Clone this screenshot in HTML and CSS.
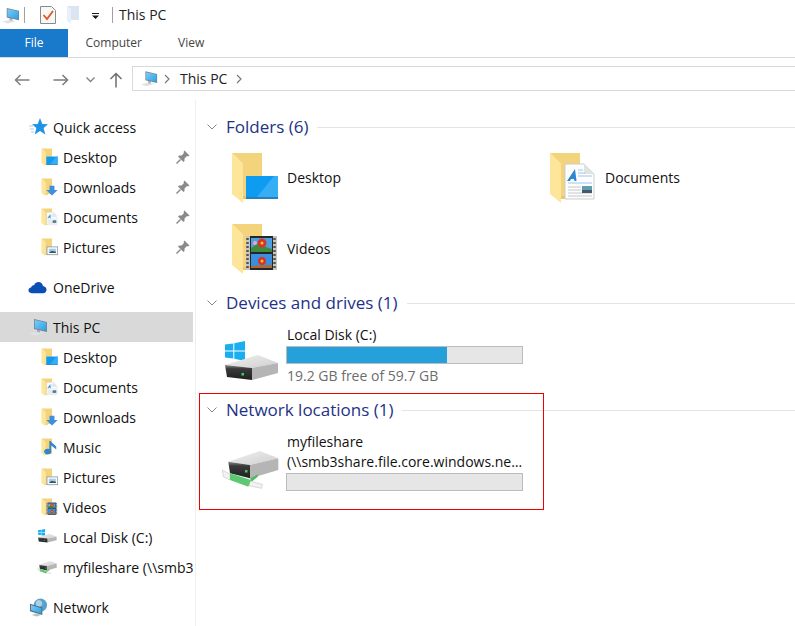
FILE: index.html
```html
<!DOCTYPE html>
<html lang="en">
<head>
<meta charset="utf-8">
<title>This PC</title>
<link rel="stylesheet" href="styles.css">
</head>
<body>
<svg class="defs" aria-hidden="true">
  <defs>
    <linearGradient id="scr" x1="0" y1="0" x2="1" y2="1"><stop offset="0" stop-color="#7ccdf7"/><stop offset="1" stop-color="#2aa0e6"/></linearGradient>
    <linearGradient id="topface" x1="0" y1="0" x2="1" y2="1"><stop offset="0" stop-color="#f0f0f0"/><stop offset="1" stop-color="#cfcfcf"/></linearGradient>
    <linearGradient id="panel" x1="0" y1="0" x2="0" y2="1"><stop offset="0" stop-color="#8c8c8c"/><stop offset=".25" stop-color="#3a3a3a"/><stop offset="1" stop-color="#1f2020"/></linearGradient>
    <symbol id="pc" viewBox="0 0 20 18">
      <path d="M1 15.500 10 13.500 16 15 7 17.500Z" fill="#dfe2e5"/>
      <path d="M9 11.500v2.500l3 .5v-2.500Z" fill="#a8b0b6"/>
      <path d="M6 1 19 4v10L6 11Z" fill="#76848f"/>
      <path d="M6.800 2 18.200 4.600v8.200L6.800 10.200Z" fill="url(#scr)"/>
    </symbol>
    <symbol id="folder" viewBox="0 0 48 52">
      <path d="M1 1h30v44H12V12Z" fill="#f3d37b"/>
      <path d="M1 1 12 12 12 51 1 42Z" fill="#fde69a"/>
      <path d="M12 44h8v3h-8Z" fill="#e9c668"/>
    </symbol>
    <symbol id="ov-desktop" viewBox="0 0 48 52">
      <rect x="15" y="24" width="32" height="23" fill="#0e9bf2"/>
      <path d="M26 45 43 24h4v21Z" fill="#35aef5"/>
      <rect x="15" y="45" width="32" height="2" fill="#2a7fb8"/>
    </symbol>
    <symbol id="ov-down" viewBox="0 0 48 52">
      <path d="M24 22h14v12h9L31 49 15 34h9Z" fill="#3f8fdc"/>
    </symbol>
    <symbol id="ov-doc" viewBox="0 0 48 52">
      <path d="M16 12h19l10 10v25H16Z" fill="#fdfdfd" stroke="#c9cdd0"/>
      <path d="M35 12v10h10Z" fill="#dfe3e6"/>
      <path d="M24 20 18 29h3l1-2h3l.5 2h2L26 17Z" fill="#2f86d0"/>
      <path d="M29 18h5M29 21h7M29 24h14M19 31h24" stroke="#9cc8ea"/>
      <path d="M19 35h13M19 38h13M19 41h24M19 44h24" stroke="#c4c8cc"/>
      <rect x="33" y="34" width="10" height="7" fill="#5f9db0"/>
      <rect x="33" y="38" width="10" height="3" fill="#44596a"/>
    </symbol>
    <symbol id="ov-pic" viewBox="0 0 48 52">
      <rect x="17" y="25" width="30" height="22" fill="#fff" stroke="#8f9aa3" stroke-width="2.400"/>
      <rect x="22" y="30" width="20" height="12" fill="#9fcdf0"/>
      <path d="M22 42 30 36l12 3v3Z" fill="#3d5563"/>
    </symbol>
    <symbol id="ov-music" viewBox="0 0 48 52">
      <path d="M26 8v26" stroke="#2f86d0" stroke-width="5" fill="none"/>
      <path d="M26 8 43 24v8L26 18Z" fill="#2f86d0"/>
      <ellipse cx="19" cy="38" rx="10" ry="8" fill="#2f86d0"/>
    </symbol>
    <symbol id="ov-film" viewBox="0 0 48 52">
      <rect x="15" y="13" width="31" height="34" fill="#c9c6bf"/>
      <rect x="19" y="13" width="23" height="34" fill="#23272b"/>
      <path d="M16.500 15v30M43.500 15v30" stroke="#55544f" stroke-width="2.500" stroke-dasharray="2 2"/>
      <rect x="20" y="15" width="21" height="14" fill="#4da0e0"/>
      <rect x="20" y="31" width="21" height="14" fill="#3a8fe0"/>
      <path d="M20 25 26 21 41 26v3H20Z" fill="#3f8a3c"/>
      <path d="M20 43 41 42v3H20Z" fill="#b06a2c"/>
      <circle cx="31" cy="20" r="4.500" fill="#d8332a"/>
      <circle cx="31" cy="20" r="1.500" fill="#f2c41f"/>
      <circle cx="31" cy="38" r="4" fill="#d8332a"/>
      <circle cx="31" cy="38" r="1.500" fill="#f2c41f"/>
      <circle cx="24" cy="20" r="2" fill="#e8a8c8"/>
    </symbol>
    <symbol id="star" viewBox="0 0 19 18">
      <path d="M11 0 13.300 6 19 6.200 14.600 10 16.300 16.500 11 13 5.700 16.500 7.400 10 3 6.200 8.700 6Z" fill="#1f93e6"/>
      <path d="M0 8h4M1 11h4M2 14h3" stroke="#a8d0ee"/>
    </symbol>
    <symbol id="cloud" viewBox="0 0 20 13">
      <path d="M4 12.500C1.500 12.500.5 11 .5 9.500.5 8 1.500 6.800 3.200 6.600 3.800 4.800 5 4.200 6.400 4.200 7.300 2 9 .8 11 .8c2.700 0 4.500 1.800 4.800 4.200 2 .2 3.700 1.800 3.700 3.800 0 2-1.500 3.700-3.700 3.700Z" fill="#0b4fb4"/>
    </symbol>
    <symbol id="globe" viewBox="0 0 20 20">
      <circle cx="12" cy="7.500" r="7" fill="#5aa0c9"/>
      <path d="M8 3c3-2 6 0 6 3s-3 2-4 5-4-5-2-8Z" fill="#a9d2e8"/>
      <path d="M1 6 14 10v8L1 14Z" fill="#546a7a"/>
      <path d="M2 7.300 13 10.700v6L2 13Z" fill="url(#scr)"/>
      <path d="M3 18l5-2 5 2-5 1.500Z" fill="#b8c0c6"/>
    </symbol>
    <symbol id="drive" viewBox="0 0 60 50">
      <path d="M3 5.500 11.300 4.500V11.500H3Z" fill="#19aef0"/>
      <path d="M12.300 4.300 23 2V11.500H12.300Z" fill="#19aef0"/>
      <path d="M3 12.500H11.300V19.500L3 18.500Z" fill="#19aef0"/>
      <path d="M12.300 12.500H23V22L12.300 19.700Z" fill="#19aef0"/>
      <path d="M3 26 36 16 56 24 30 29Z" fill="url(#topface)"/>
      <path d="M30 29 56 24V34L30 41Z" fill="#b5b5b5"/>
      <path d="M3 26 30 29V41L5 38Z" fill="url(#panel)"/>
      <rect x="19.500" y="34" width="2.500" height="2.500" fill="#37d25b"/>
    </symbol>
    <symbol id="netdrive" viewBox="0 0 60 50">
      <path d="M6.300 18.700 38 8 56.300 15.300 28 22Z" fill="url(#topface)"/>
      <path d="M28 22 56.300 15.300V27L28 35.300Z" fill="#b5b5b5"/>
      <path d="M6.300 18.700 28 22V35.300L8 30.300Z" fill="url(#panel)"/>
      <rect x="23" y="27" width="2.500" height="2.500" fill="#37d25b"/>
      <path d="M28 35.300 36.300 31.300 35.700 33.700 29.700 38.700Z" fill="#4fb963"/>
      <path d="M.3 27 8 31.300V37L1.300 33.700Z" fill="#f2f2f2" stroke="#c4c4c4" stroke-width=".6"/>
      <path d="M28 38 40.300 41.300 39.700 45.300 27 42.700Z" fill="#f2f2f2" stroke="#c4c4c4" stroke-width=".6"/>
      <path d="M8 30.300 29 37 26.300 43.700 8 37Z" fill="#5cc870"/>
    </symbol>
    <symbol id="pin" viewBox="0 0 14 14">
      <path d="M8.500.5 13.500 5.500 12 6.500 11 6 8.500 8.500 8.500 11 7.500 12 2 6.500 3 5.500H5.500L8 3 7.500 2Z" fill="#8a8a8a"/>
      <path d="M4.500 9.500.5 13.500" stroke="#8a8a8a" stroke-width="1.400"/>
    </symbol>
  </defs>
</svg>

<div class="app">
  <header class="titlebar">
    <svg class="ic-pc"><use href="#pc"/></svg>
    <span class="qsep"></span>
    <svg class="ic-check" viewBox="0 0 16 18">
      <path d="M.5.500h11l4 4v13H.5Z" fill="#f7f7f7" stroke="#8a8a8a"/>
      <path d="M3.500 9 7 13 13 5" fill="none" stroke="#e2561c" stroke-width="1.800"/>
    </svg>
    <svg class="ic-qfolder" viewBox="0 0 12 18">
      <path d="M0 0h12v14H0Z" fill="#dbe5f1"/>
      <path d="M0 0 4 3v15L0 15Z" fill="#eaf0f8"/>
    </svg>
    <svg class="ic-drop" viewBox="0 0 7 6">
      <path d="M0 0h7v1H0ZM0 2.500h7L3.500 6Z" fill="#1a1a1a"/>
    </svg>
    <span class="qsep qsep-b"></span>
    <span class="wintitle">This PC</span>
  </header>

  <nav class="tabs">
    <span class="tab tab-file">File</span>
    <span class="tab">Computer</span>
    <span class="tab">View</span>
  </nav>

  <div class="navbar">
    <svg class="ic-back" viewBox="0 0 16 12"><path d="M15.500 6H1.500M6.500 1 1.500 6l5 5" fill="none" stroke="#808080" stroke-width="1.500"/></svg>
    <svg class="ic-fwd" viewBox="0 0 16 12"><path d="M.5 6h14M9.500 1l5 5-5 5" fill="none" stroke="#7a7a7a" stroke-width="1.500"/></svg>
    <svg class="ic-hist" viewBox="0 0 9 6"><path d="M.5.500 4.500 4.500 8.500.5" fill="none" stroke="#808080" stroke-width="1.300"/></svg>
    <svg class="ic-up" viewBox="0 0 14 16"><path d="M7 15.500V1.500M1.500 7 7 1.500 12.500 7" fill="none" stroke="#6e6e6e" stroke-width="1.500"/></svg>
    <div class="address">
      <svg class="ic-pc"><use href="#pc"/></svg>
      <svg class="crumb" viewBox="0 0 6 10"><path d="M1 1l4 4-4 4" fill="none" stroke="#7a7a7a" stroke-width="1.200"/></svg>
      <span class="addr-text">This PC</span>
      <svg class="crumb" viewBox="0 0 6 10"><path d="M1 1l4 4-4 4" fill="none" stroke="#7a7a7a" stroke-width="1.200"/></svg>
    </div>
  </div>

  <div class="main">
    <aside class="sidebar">
      <ul class="tree">
        <li class="row"><span class="slot"><svg class="ic-star"><use href="#star"/></svg></span><span class="label">Quick access</span></li>
        <li class="row sub"><span class="slot"><svg class="ic-f"><use href="#folder"/><use href="#ov-desktop"/></svg></span><span class="label">Desktop</span><svg class="ic-pin"><use href="#pin"/></svg></li>
        <li class="row sub"><span class="slot"><svg class="ic-f"><use href="#folder"/><use href="#ov-down"/></svg></span><span class="label">Downloads</span><svg class="ic-pin"><use href="#pin"/></svg></li>
        <li class="row sub"><span class="slot"><svg class="ic-f"><use href="#folder"/><use href="#ov-doc"/></svg></span><span class="label">Documents</span><svg class="ic-pin"><use href="#pin"/></svg></li>
        <li class="row sub"><span class="slot"><svg class="ic-f"><use href="#folder"/><use href="#ov-pic"/></svg></span><span class="label">Pictures</span><svg class="ic-pin"><use href="#pin"/></svg></li>
      </ul>
      <ul class="tree">
        <li class="row"><span class="slot"><svg class="ic-cloud"><use href="#cloud"/></svg></span><span class="label">OneDrive</span></li>
      </ul>
      <ul class="tree">
        <li class="row selected"><span class="slot"><svg class="ic-pc"><use href="#pc"/></svg></span><span class="label">This PC</span></li>
        <li class="row sub"><span class="slot"><svg class="ic-f"><use href="#folder"/><use href="#ov-desktop"/></svg></span><span class="label">Desktop</span></li>
        <li class="row sub"><span class="slot"><svg class="ic-f"><use href="#folder"/><use href="#ov-doc"/></svg></span><span class="label">Documents</span></li>
        <li class="row sub"><span class="slot"><svg class="ic-f"><use href="#folder"/><use href="#ov-down"/></svg></span><span class="label">Downloads</span></li>
        <li class="row sub"><span class="slot"><svg class="ic-f"><use href="#folder"/><use href="#ov-music"/></svg></span><span class="label">Music</span></li>
        <li class="row sub"><span class="slot"><svg class="ic-f"><use href="#folder"/><use href="#ov-pic"/></svg></span><span class="label">Pictures</span></li>
        <li class="row sub"><span class="slot"><svg class="ic-f"><use href="#folder"/><use href="#ov-film"/></svg></span><span class="label">Videos</span></li>
        <li class="row sub"><span class="slot"><svg class="ic-d"><use href="#drive"/></svg></span><span class="label">Local Disk (C:)</span></li>
        <li class="row sub"><span class="slot"><svg class="ic-d"><use href="#netdrive"/></svg></span><span class="label">myfileshare (\\smb3share.file.core.windows.net)</span></li>
      </ul>
      <ul class="tree">
        <li class="row"><span class="slot"><svg class="ic-globe"><use href="#globe"/></svg></span><span class="label">Network</span></li>
      </ul>
    </aside>

    <main class="content">
      <section class="group">
        <h2 class="ghead"><svg class="ic-chev" viewBox="0 0 10 6"><path d="M.5.500 5 5 9.500.500" fill="none" stroke="#8a8a8a"/></svg><span class="gtitle">Folders (6)</span><span class="grule"></span></h2>
        <div class="folders">
          <div class="ftile"><svg class="ic-fl"><use href="#folder"/><use href="#ov-desktop"/></svg><span class="fname">Desktop</span></div>
          <div class="ftile"><svg class="ic-fl"><use href="#folder"/><use href="#ov-doc"/></svg><span class="fname">Documents</span></div>
          <div class="ftile"><svg class="ic-fl"><use href="#folder"/><use href="#ov-film"/></svg><span class="fname">Videos</span></div>
        </div>
      </section>

      <section class="group">
        <h2 class="ghead"><svg class="ic-chev" viewBox="0 0 10 6"><path d="M.5.500 5 5 9.500.500" fill="none" stroke="#8a8a8a"/></svg><span class="gtitle">Devices and drives (1)</span><span class="grule"></span></h2>
        <div class="dtile">
          <svg class="ic-dl"><use href="#drive"/></svg>
          <div class="dinfo">
            <div class="dname">Local Disk (C:)</div>
            <div class="meter"><div class="meter-fill" style="width:68%"></div></div>
            <div class="dfree">19.2 GB free of 59.7 GB</div>
          </div>
        </div>
      </section>

      <section class="group">
        <h2 class="ghead"><svg class="ic-chev" viewBox="0 0 10 6"><path d="M.5.500 5 5 9.500.500" fill="none" stroke="#8a8a8a"/></svg><span class="gtitle">Network locations (1)</span><span class="grule"></span></h2>
        <div class="dtile dtile-net">
          <svg class="ic-dl"><use href="#netdrive"/></svg>
          <div class="dinfo">
            <div class="dname">myfileshare</div>
            <div class="dname clip">(\\smb3share.file.core.windows.net\myfileshare)</div>
            <div class="meter meter-net"></div>
          </div>
        </div>
      </section>
    </main>
  </div>

  <div class="callout"></div>
</div>
</body>
</html>
```
FILE: styles.css
```css
* { box-sizing: border-box; }
html, body { margin: 0; padding: 0; background: #fff; }
body { font-family: "Open Sans", "Noto Sans", sans-serif; font-size: 14px; color: #111; overflow: hidden; }
.defs { width: 0; height: 0; display: block; }
svg { display: block; flex: none; }
.app { position: relative; width: 795px; height: 626px; overflow: hidden; }

.titlebar { height: 29px; display: flex; align-items: center; padding-left: 1px; }
.titlebar .ic-pc { width: 19px; height: 17px; margin-top: 1px; }
.qsep { width: 1px; height: 16px; background: #a0a0a0; margin-left: 4px; margin-top: 1px; }
.ic-check { width: 16px; height: 18px; margin-left: 15px; margin-top: 1px; }
.ic-qfolder { width: 12px; height: 18px; margin-left: 11px; margin-top: 1px; }
.ic-drop { width: 7px; height: 6px; margin-left: 13px; margin-top: 2px; }
.qsep-b { margin-left: 13px; }
.wintitle { margin-left: 6px; font-size: 14px; color: #222; line-height: 29px; }

.tabs { height: 29px; display: flex; border-bottom: 1px solid #d9d9d9; }
.tab { padding: 0 18.500px 0 17.500px; line-height: 28px; font-size: 12px; color: #444; }
.tab-file { width: 68px; padding: 0; text-align: center; background: #1979ca; color: #fff; }

.navbar { height: 42px; display: flex; align-items: center; padding-left: 14px; padding-top: 2px; }
.ic-back { width: 16px; height: 12px; }
.ic-fwd { width: 16px; height: 12px; margin-left: 23px; }
.ic-hist { width: 9px; height: 6px; margin-left: 17px; }
.ic-up { width: 14px; height: 16px; margin-left: 14px; }
.address { margin: -3px -4px 0 9px; flex: 1; height: 25px; border: 1px solid #d9d9d9; display: flex; align-items: center; padding-left: 7px; }
.address .ic-pc { width: 18px; height: 17px; }
.crumb { width: 6px; height: 10px; margin-left: 6px; }
.addr-text { margin-left: 10px; font-size: 14px; color: #222; }
.addr-text + .crumb { margin-left: 9px; }

.main { display: flex; height: 526px; }
.sidebar { width: 196px; flex: none; padding: 12px 2px 0 0; border-right: 1px solid #efefef; }
.tree { list-style: none; margin: 0 0 10px; padding: 0; }
.row { height: 30px; display: flex; align-items: center; padding-left: 28px; overflow: hidden; white-space: nowrap; }
.row.sub { padding-left: 38px; }
.row.selected { background: #d9d9d9; }
.slot { width: 20px; height: 30px; flex: none; display: flex; align-items: center; justify-content: flex-end; margin-right: 5px; }
.label { font-size: 14px; color: #111; }
.ic-pin { width: 14px; height: 14px; margin-left: auto; margin-right: 3px; }
.ic-f { width: 17px; height: 18.500px; }
.ic-d { width: 21px; height: 18px; }
.ic-star { width: 19px; height: 18px; }
.ic-cloud { width: 19px; height: 13px; margin-right: 1px; }
.row .ic-pc { width: 20px; height: 18px; }
.ic-globe { width: 19px; height: 19px; }

.content { flex: 1; min-width: 0; padding: 12px 0 0 11px; }
.ghead { height: 30px; margin: 0; display: flex; align-items: center; font-weight: 400; }
.ic-chev { width: 10px; height: 6px; margin-right: 9px; }
.gtitle { font-size: 17px; color: #1e3287; white-space: nowrap; margin-top: -2px; }
.grule { flex: 1; height: 1px; background: #e4e4e4; margin-left: 9px; }

.folders { display: grid; grid-template-columns: 318px 1fr; grid-auto-rows: 71px; padding-left: 24px; height: 146px; }
.ftile { display: flex; align-items: center; }
.ic-fl { width: 48px; height: 52px; }
.fname { margin-left: 8px; font-size: 14px; color: #111; }

.dtile { display: flex; padding-left: 15px; height: 77px; align-items: flex-start; }
.dtile-net { height: 80px; }
.ic-dl { width: 60px; height: 50px; margin-top: 21px; }
.dtile-net .ic-dl { margin-top: 18px; }
.dinfo { width: 237px; margin-left: 4px; padding-top: 7px; }
.dname { font-size: 14px; line-height: 20px; color: #111; padding-left: 1px; }
.clip { white-space: nowrap; overflow: hidden; text-overflow: ellipsis; }
.meter { height: 18px; margin-top: 1px; background: #e6e6e6; border: 1px solid #bcbcbc; }
.meter-net { margin-top: 1px; }
.meter-fill { height: 100%; background: #26a0da; }
.dfree { font-size: 14px; line-height: 20px; color: #6d6d6d; padding-left: 1px; margin-top: 2px; }

.callout { position: absolute; left: 199px; top: 393px; width: 345px; height: 117px; border: 1px solid #f00000; pointer-events: none; }
```
